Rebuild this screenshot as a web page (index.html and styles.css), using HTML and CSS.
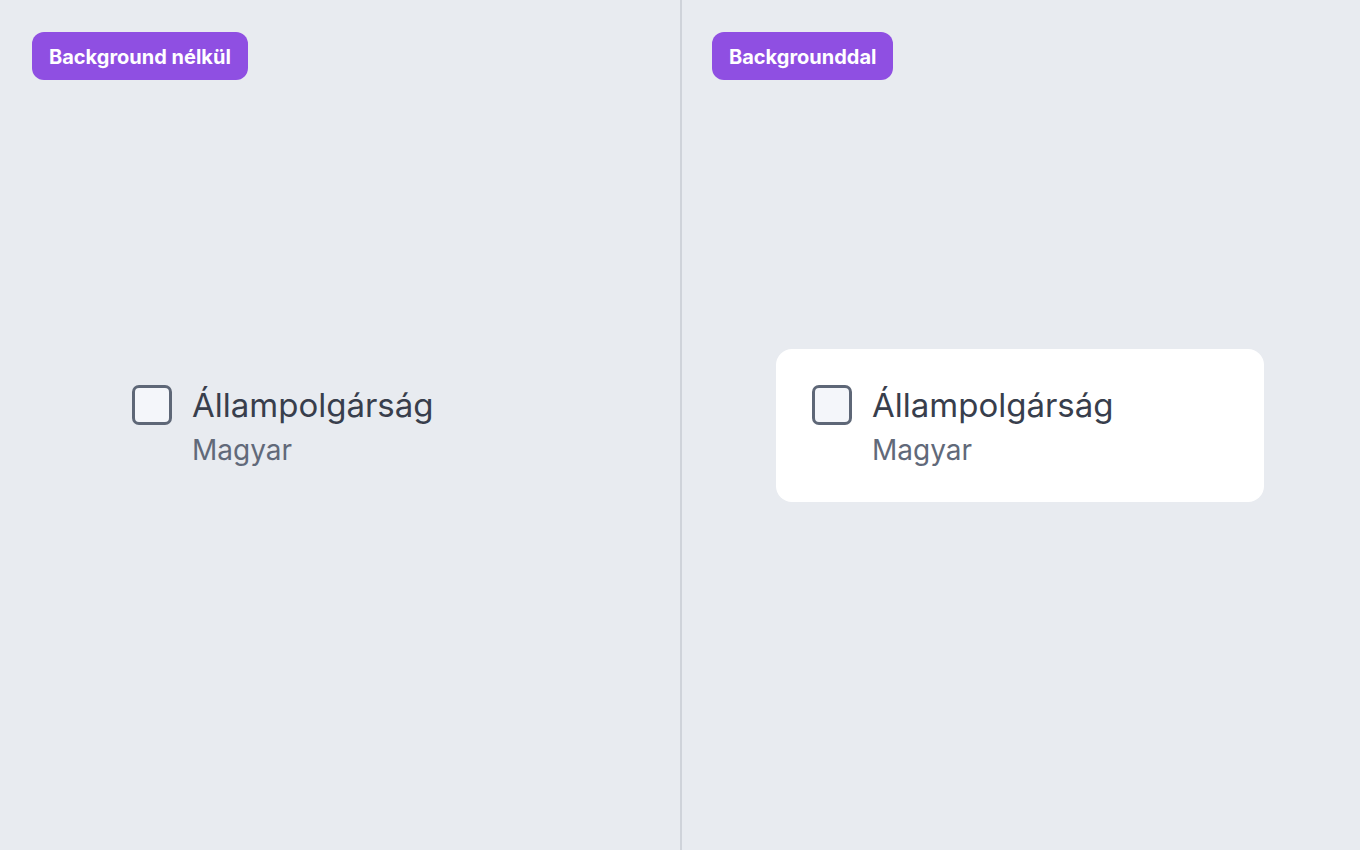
FILE: index.html
```html
<!DOCTYPE html>
<html lang="hu">
<head>
<meta charset="UTF-8">
<meta name="viewport" content="width=device-width, initial-scale=1.0">
<title>Checkbox - Background</title>
<link rel="stylesheet" href="styles.css">
</head>
<body>
<div class="split">
    <section class="pane">
        <span class="badge">Background nélkül</span>
        <div class="stage">
            <label class="option">
                <span class="box"></span>
                <span class="texts">
                    <span class="title">Állampolgárság</span>
                    <span class="value">Magyar</span>
                </span>
            </label>
        </div>
    </section>
    <section class="pane pane-right">
        <span class="badge">Backgrounddal</span>
        <div class="stage">
            <label class="option option-card">
                <span class="box"></span>
                <span class="texts">
                    <span class="title">Állampolgárság</span>
                    <span class="value">Magyar</span>
                </span>
            </label>
        </div>
    </section>
</div>
</body>
</html>
```

FILE: styles.css
```css
html, body {
    margin: 0;
    height: 100%;
}
body {
    font-family: Inter, "Noto Sans", sans-serif;
    background-color: #e8ebf0;
}
.split {
    display: flex;
    height: 100%;
}
.pane {
    flex: 1;
    position: relative;
    display: flex;
    align-items: center;
    justify-content: center;
}
/* divider line between the two halves */
.pane-right::before {
    content: "";
    position: absolute;
    top: 0;
    bottom: 0;
    left: 0;
    width: 2px;
    background-color: #cfd3da;
}
.badge {
    position: absolute;
    top: 32px;
    left: 32px;
    box-sizing: border-box;
    height: 48px;
    padding: 2px 17px 0;
    display: flex;
    align-items: center;
    border-radius: 12px;
    background-color: #8f4fe2;
    color: #fff;
    font-size: 20px;
    font-weight: 700;
}
.stage {
    width: 488px;
}
.option {
    display: flex;
    gap: 20px;
    padding: 36px 36px 35px;
    border-radius: 16px;
}
.option-card {
    background-color: #fff;
}
.box {
    flex: none;
    width: 34px;
    height: 34px;
    border: 3px solid #5e6777;
    border-radius: 7px;
    background-color: #f4f6fa;
}
.texts {
    display: flex;
    flex-direction: column;
}
.title {
    font-size: 33px;
    line-height: 40px;
    color: #383e4c;
}
.value {
    margin-top: 8px;
    font-size: 28px;
    line-height: 34px;
    color: #616979;
}
```
